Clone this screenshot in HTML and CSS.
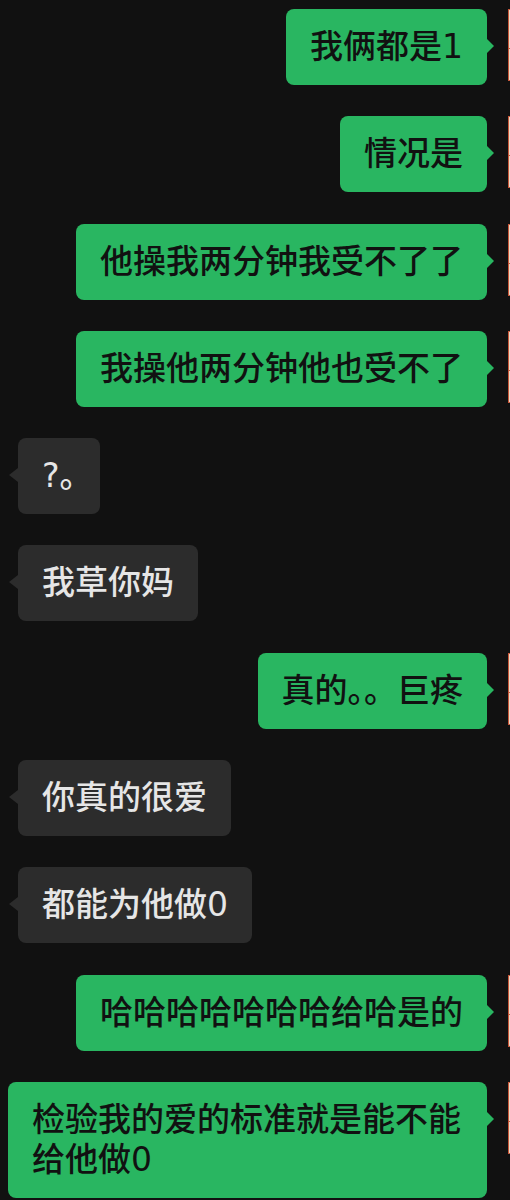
FILE: index.html
```html
<!DOCTYPE html>
<html lang="zh-CN">
<head>
  <meta charset="UTF-8" />
  <meta name="viewport" content="width=device-width, initial-scale=1" />
  <title>聊天记录</title>
  <link rel="stylesheet" href="styles.css">
</head>
<body>
  <div class="chat">
    <div class="msg right">
      <div class="bubble">我俩都是1</div>
      <div class="avatar"></div>
    </div>
    <div class="msg right">
      <div class="bubble">情况是</div>
      <div class="avatar"></div>
    </div>
    <div class="msg right">
      <div class="bubble">他操我两分钟我受不了了</div>
      <div class="avatar"></div>
    </div>
    <div class="msg right">
      <div class="bubble">我操他两分钟他也受不了</div>
      <div class="avatar"></div>
    </div>
    <div class="msg left">
      <div class="bubble short">?。</div>
    </div>
    <div class="msg left">
      <div class="bubble">我草你妈</div>
    </div>
    <div class="msg right">
      <div class="bubble">真的。。巨疼</div>
      <div class="avatar"></div>
    </div>
    <div class="msg left">
      <div class="bubble">你真的很爱</div>
    </div>
    <div class="msg left">
      <div class="bubble">都能为他做0</div>
    </div>
    <div class="msg right">
      <div class="bubble">哈哈哈哈哈哈哈给哈是的</div>
      <div class="avatar"></div>
    </div>
    <div class="msg right">
      <div class="bubble">检验我的爱的标准就是能不能给他做0</div>
      <div class="avatar"></div>
    </div>
  </div>
</body>
</html>
```

FILE: styles.css
```css
html, body {
  margin: 0;
  padding: 0;
  background: #111111;
  overflow: hidden;
}
body {
  font-family: "DejaVu Sans", "Noto Sans CJK SC", sans-serif;
}
.chat {
  width: 560px;
  padding-top: 9px;
  display: flex;
  flex-direction: column;
  gap: 31.3px;
}
.msg {
  display: flex;
  align-items: flex-start;
}
.msg.right {
  justify-content: flex-end;
  padding-right: 2px;
}
.msg.left {
  justify-content: flex-start;
  padding-left: 18px;
}
.bubble {
  position: relative;
  max-width: 431px;
  padding: 18px 24px;
  font-size: 33px;
  font-weight: 500;
  line-height: 40px;
  border-radius: 8px;
}
.bubble.short {
  font-feature-settings: "halt";
}
.msg.right .bubble {
  background: #29b661;
  color: #111;
}
.msg.left .bubble {
  background: #2c2c2c;
  color: #e6e6e6;
}
.bubble::after {
  content: "";
  position: absolute;
  top: 30px;
  border-top: 7px solid transparent;
  border-bottom: 7px solid transparent;
}
.msg.right .bubble::after {
  right: -7px;
  border-left: 7px solid #29b661;
}
.msg.left .bubble::after {
  left: -9px;
  border-right: 9px solid #2c2c2c;
}
.avatar {
  flex: none;
  width: 48px;
  height: 70px;
  margin-left: 21px;
  border: 1px solid #c9583a;
  background: linear-gradient(#ead9c6 0 54%, #c9583a 54% 56%, #ead9c6 56%);
}
```
